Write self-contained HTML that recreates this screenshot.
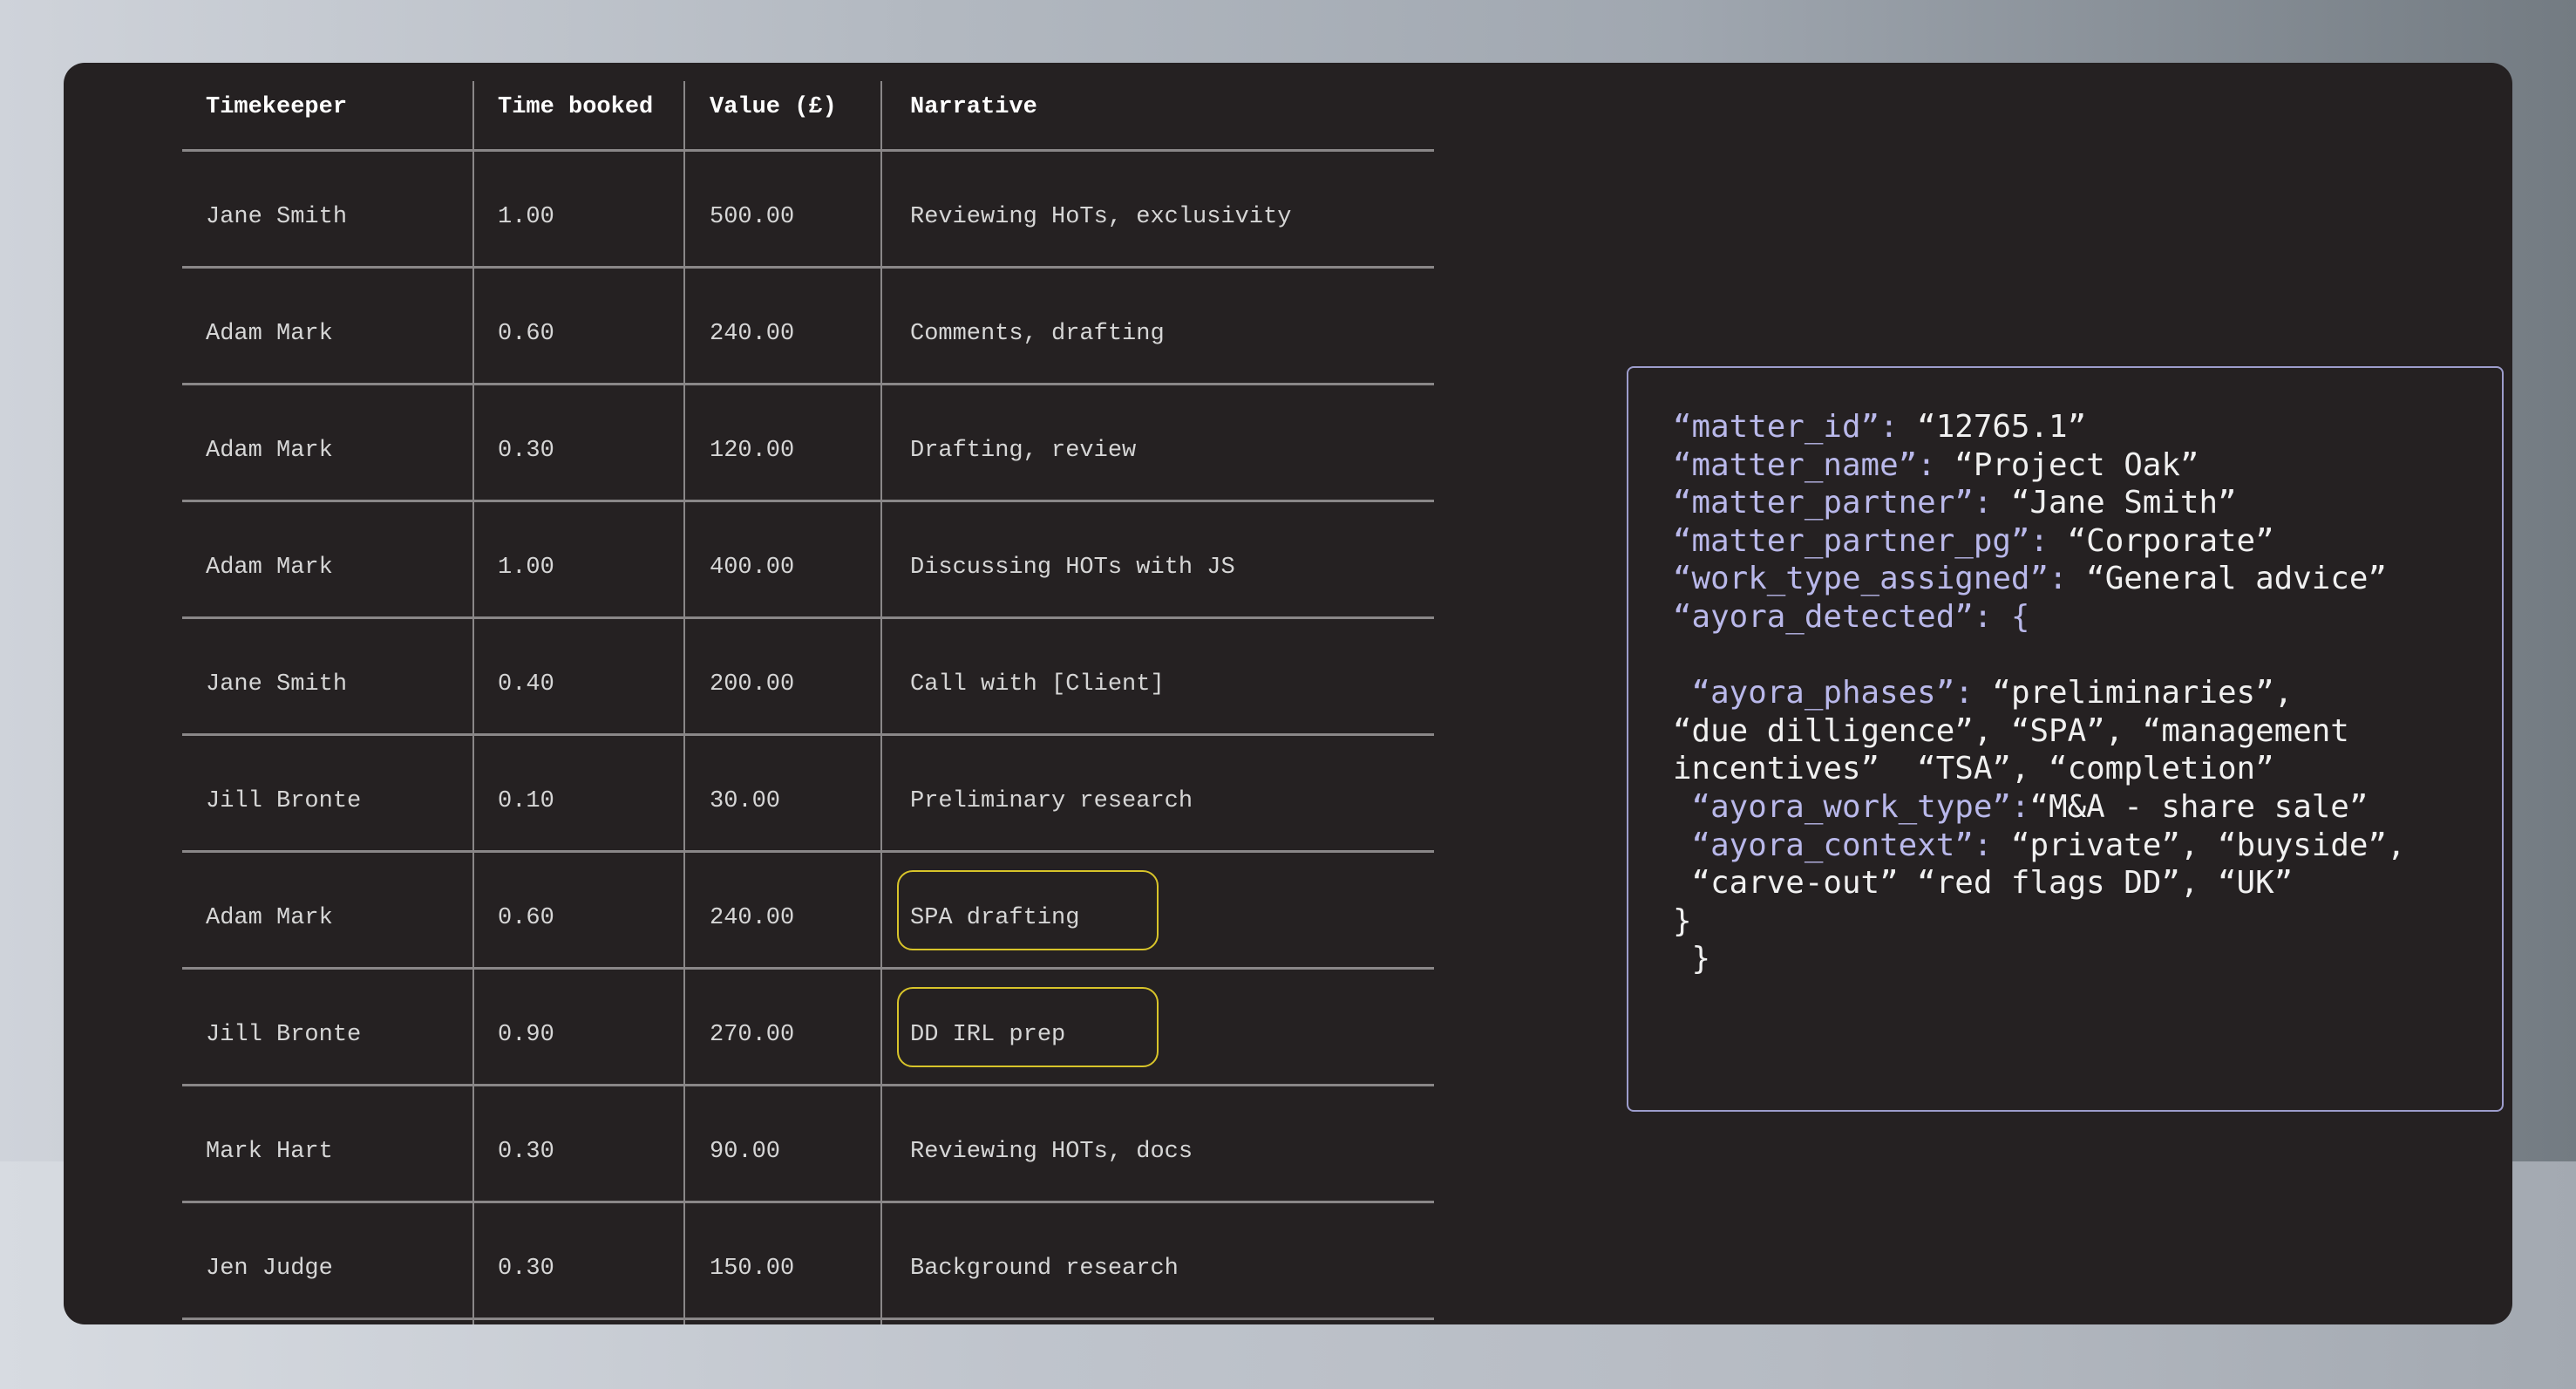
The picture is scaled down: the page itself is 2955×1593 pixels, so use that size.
<!DOCTYPE html>
<html><head><meta charset="utf-8"><style>
html,body{margin:0;padding:0;width:2955px;height:1593px;overflow:hidden}
body{background:linear-gradient(90deg,#cfd3da 0%,#b3b9c1 35%,#a0a7b0 65%,#737b82 100%);position:relative;font-family:"Liberation Mono",monospace}
.band{position:absolute;left:0;top:1332px;width:2955px;height:261px;background:linear-gradient(90deg,#d7dbe1 0%,#bfc4cc 40%,#b6bbc3 70%,#a3a9b1 100%)}
.card{position:absolute;left:73px;top:72px;width:2809px;height:1447px;background:#252122;border-radius:24px;overflow:hidden}
.h{position:absolute;height:3px;background:#8a8788;left:136px;width:1436px}
.v{position:absolute;width:2px;background:#8a8788;top:21px;height:1430px}
.t{position:absolute;font-size:27px;color:#d6d6d6;line-height:30px;white-space:pre;margin-top:4px}
.b{font-weight:bold;color:#fff}
.y{position:absolute;border:2px solid #d8c42a;border-radius:18px;width:296px;height:88px;left:956px}
.json{position:absolute;left:1793px;top:348px;width:1002px;height:851px;border:2px solid #9d9dcc;border-radius:8px}
.j{position:absolute;left:1846px;font-family:"DejaVu Sans Mono",monospace;font-size:35.8px;line-height:43.6px;color:#f0f0f0;white-space:pre}
.k{color:#b9b8ea}
</style></head><body>
<div class="band"></div>
<div class="card">
<div class="v" style="left:469px"></div>
<div class="v" style="left:711px"></div>
<div class="v" style="left:937px"></div>
<div class="h" style="top:99px"></div>
<div class="h" style="top:233px"></div>
<div class="h" style="top:367px"></div>
<div class="h" style="top:501px"></div>
<div class="h" style="top:635px"></div>
<div class="h" style="top:769px"></div>
<div class="h" style="top:903px"></div>
<div class="h" style="top:1037px"></div>
<div class="h" style="top:1171px"></div>
<div class="h" style="top:1305px"></div>
<div class="h" style="top:1439px"></div>
<div class="t b" style="left:163px;top:32px">Timekeeper</div>
<div class="t b" style="left:498px;top:32px">Time booked</div>
<div class="t b" style="left:741px;top:32px">Value (£)</div>
<div class="t b" style="left:971px;top:32px">Narrative</div>

<div class="t" style="left:163px;top:158px">Jane Smith</div><div class="t" style="left:498px;top:158px">1.00</div><div class="t" style="left:741px;top:158px">500.00</div><div class="t" style="left:971px;top:158px">Reviewing HoTs, exclusivity</div>
<div class="t" style="left:163px;top:292px">Adam Mark</div><div class="t" style="left:498px;top:292px">0.60</div><div class="t" style="left:741px;top:292px">240.00</div><div class="t" style="left:971px;top:292px">Comments, drafting</div>
<div class="t" style="left:163px;top:426px">Adam Mark</div><div class="t" style="left:498px;top:426px">0.30</div><div class="t" style="left:741px;top:426px">120.00</div><div class="t" style="left:971px;top:426px">Drafting, review</div>
<div class="t" style="left:163px;top:560px">Adam Mark</div><div class="t" style="left:498px;top:560px">1.00</div><div class="t" style="left:741px;top:560px">400.00</div><div class="t" style="left:971px;top:560px">Discussing HOTs with JS</div>
<div class="t" style="left:163px;top:694px">Jane Smith</div><div class="t" style="left:498px;top:694px">0.40</div><div class="t" style="left:741px;top:694px">200.00</div><div class="t" style="left:971px;top:694px">Call with [Client]</div>
<div class="t" style="left:163px;top:828px">Jill Bronte</div><div class="t" style="left:498px;top:828px">0.10</div><div class="t" style="left:741px;top:828px">30.00</div><div class="t" style="left:971px;top:828px">Preliminary research</div>
<div class="t" style="left:163px;top:962px">Adam Mark</div><div class="t" style="left:498px;top:962px">0.60</div><div class="t" style="left:741px;top:962px">240.00</div><div class="t" style="left:971px;top:962px">SPA drafting</div>
<div class="t" style="left:163px;top:1096px">Jill Bronte</div><div class="t" style="left:498px;top:1096px">0.90</div><div class="t" style="left:741px;top:1096px">270.00</div><div class="t" style="left:971px;top:1096px">DD IRL prep</div>
<div class="t" style="left:163px;top:1230px">Mark Hart</div><div class="t" style="left:498px;top:1230px">0.30</div><div class="t" style="left:741px;top:1230px">90.00</div><div class="t" style="left:971px;top:1230px">Reviewing HOTs, docs</div>
<div class="t" style="left:163px;top:1364px">Jen Judge</div><div class="t" style="left:498px;top:1364px">0.30</div><div class="t" style="left:741px;top:1364px">150.00</div><div class="t" style="left:971px;top:1364px">Background research</div>
<div class="y" style="top:926px"></div>
<div class="y" style="top:1060px"></div>
<div class="json"></div>
<div class="j" style="top:396px"><span class="k">“matter_id”: </span>“12765.1”
<span class="k">“matter_name”: </span>“Project Oak”
<span class="k">“matter_partner”: </span>“Jane Smith”
<span class="k">“matter_partner_pg”: </span>“Corporate”
<span class="k">“work_type_assigned”: </span>“General advice”
<span class="k">“ayora_detected”: {</span>

<span class="k"> “ayora_phases”: </span>“preliminaries”,
“due dilligence”, “SPA”, “management
incentives”  “TSA”, “completion”
<span class="k"> “ayora_work_type”:</span>“M&amp;A - share sale”
<span class="k"> “ayora_context”: </span>“private”, “buyside”,
 “carve-out” “red flags DD”, “UK”
}
 }</div>
</div>
</body></html>
